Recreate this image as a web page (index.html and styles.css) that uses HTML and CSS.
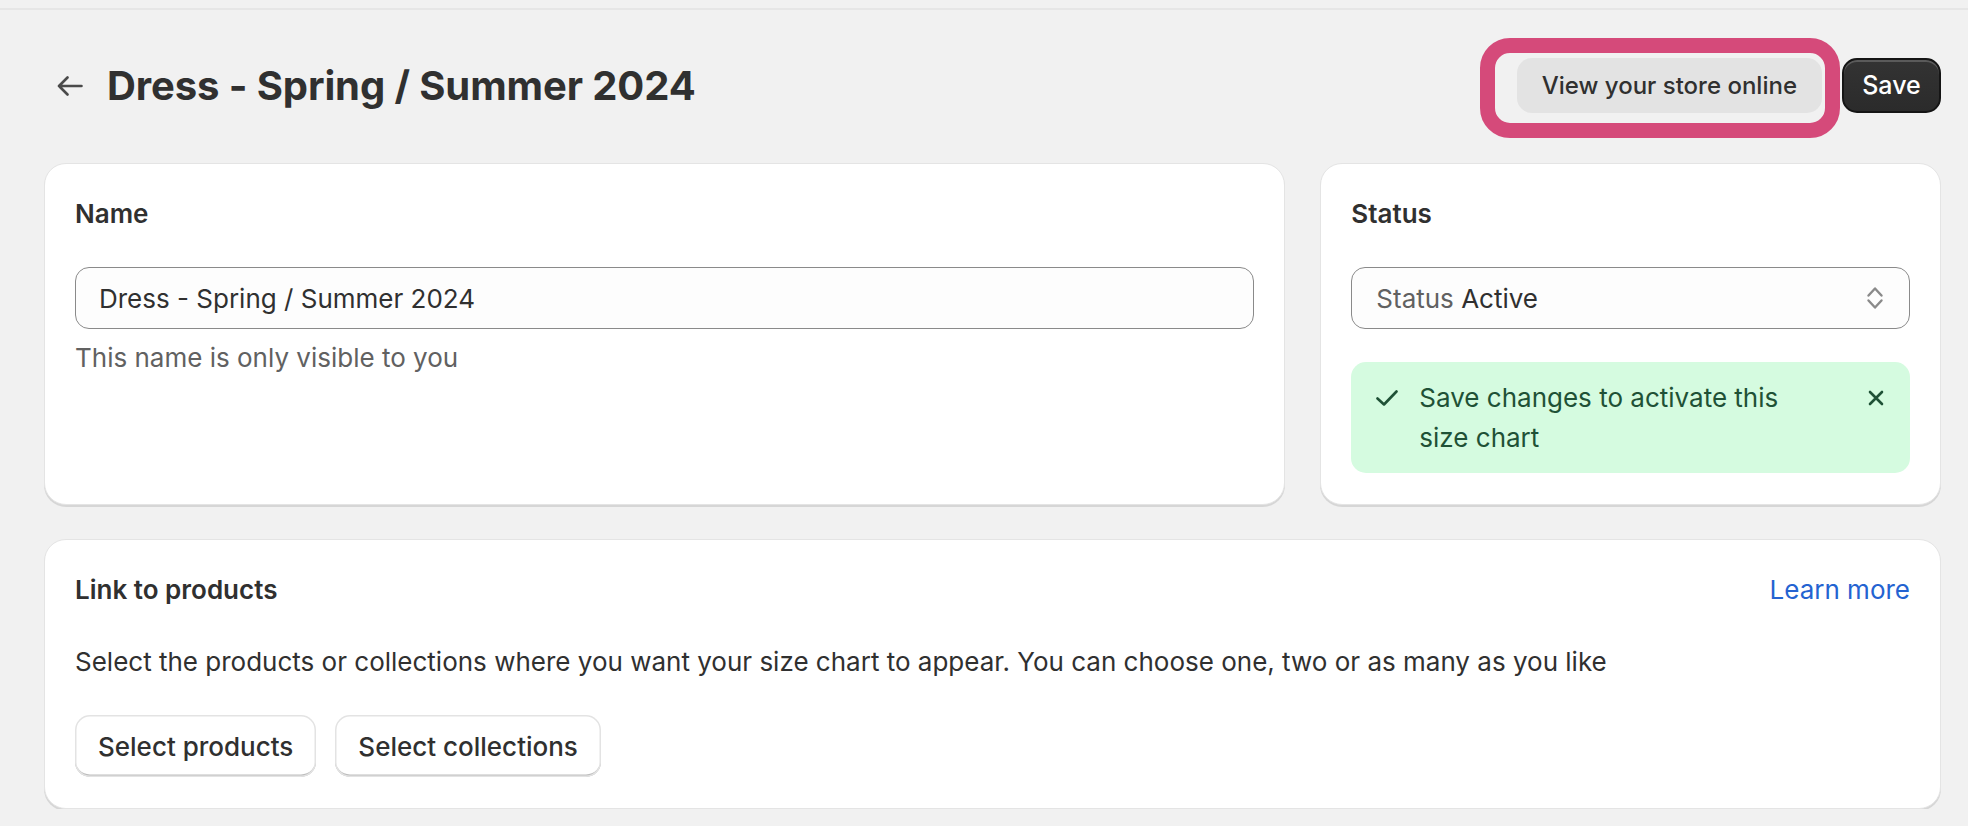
FILE: index.html
```html
<!DOCTYPE html>
<html lang="en">
<head>
<meta charset="utf-8">
<title>Dress - Spring / Summer 2024</title>
<link rel="stylesheet" href="styles.css">
</head>
<body>
<div class="topline"></div>
<main class="page">
  <header class="header">
    <div class="title-wrap">
      <button class="back" aria-label="Back">
        <svg width="26" height="20" viewBox="0 0 26 20" fill="none" stroke="#4a4a4a" stroke-width="2.6" stroke-linecap="round" stroke-linejoin="round"><path d="M24.5 10H2M10.5 1.5L2 10l8.5 8.5"/></svg>
      </button>
      <h1 class="title">Dress - Spring / Summer 2024</h1>
    </div>
    <div class="actions">
      <div class="highlight-wrap">
        <button class="btn btn-tertiary">View your store online</button>
        <span class="highlight"></span>
      </div>
      <button class="btn btn-primary">Save</button>
    </div>
  </header>

  <section class="grid">
    <div class="card">
      <h2 class="card-title">Name</h2>
      <div class="field">Dress - Spring / Summer 2024</div>
      <p class="help">This name is only visible to you</p>
    </div>
    <div class="card">
      <h2 class="card-title">Status</h2>
      <div class="field select">
        <span><span class="muted">Status</span> Active</span>
        <svg class="chev" width="18" height="26" viewBox="0 0 18 26" fill="none" stroke="#8a8a8a" stroke-width="2.4" stroke-linecap="round" stroke-linejoin="round"><path d="M2.5 10.5L9 3.5l6.5 7M2.5 15.5L9 22.5l6.5-7"/></svg>
      </div>
      <div class="banner">
        <svg class="check" width="22" height="16" viewBox="0 0 22 16" fill="none" stroke="#1f5136" stroke-width="2.6" stroke-linecap="round" stroke-linejoin="round"><path d="M1.5 8.5l6.5 6L20.5 1.5"/></svg>
        <p class="banner-text">Save changes to activate this size chart</p>
        <svg class="close" width="16" height="16" viewBox="0 0 16 16" fill="none" stroke="#1f5136" stroke-width="2.6" stroke-linecap="round"><path d="M2 2l12 12M14 2L2 14"/></svg>
      </div>
    </div>
    <div class="card wide">
      <div class="row-between">
        <h2 class="card-title">Link to products</h2>
        <a class="link" href="#">Learn more</a>
      </div>
      <p class="desc">Select the products or collections where you want your size chart to appear. You can choose one, two or as many as you like</p>
      <div class="btn-row">
        <button class="btn btn-secondary">Select products</button>
        <button class="btn btn-secondary">Select collections</button>
      </div>
    </div>
  </section>
</main>
</body>
</html>
```
FILE: styles.css
```css
* { box-sizing: border-box; }
body {
  margin: 0;
  background: #f1f1f1;
  font-family: Inter, "Noto Sans", "Liberation Sans", sans-serif;
  color: #303030;
  font-size: 26px;
  line-height: 39px;
}
.topline {
  height: 10px;
  border-bottom: 2px solid #e6e6e6;
}
.page {
  padding: 0 27px 0 44px;
}
.header {
  display: flex;
  align-items: center;
  justify-content: space-between;
  margin-top: 48px;
  height: 55px;
}
.title-wrap {
  display: flex;
  align-items: center;
  gap: 11px;
}
.back {
  width: 52px;
  height: 52px;
  border: 0;
  background: transparent;
  display: flex;
  align-items: center;
  justify-content: center;
  padding: 0;
}
.title {
  margin: 0;
  font-size: 40px;
  font-weight: 700;
  line-height: 52px;
  letter-spacing: -0.1px;
}
.actions {
  display: flex;
  align-items: center;
  gap: 20px;
}
.highlight-wrap {
  position: relative;
}
.highlight {
  position: absolute;
  left: -37px;
  top: -20px;
  right: -18px;
  bottom: -25px;
  border: 15px solid #d54a7a;
  border-radius: 30px;
  pointer-events: none;
}
.btn {
  font-family: inherit;
  font-size: 26px;
  font-weight: 550;
  line-height: 39px;
  border: 0;
  border-radius: 15px;
  display: flex;
  align-items: center;
  justify-content: center;
  color: #303030;
}
.btn-tertiary {
  height: 55px;
  padding: 0 25px;
  font-size: 24px;
  background: #e3e3e3;
}
.btn-primary {
  height: 55px;
  width: 99px;
  font-size: 25px;
  background: linear-gradient(#333 0%, #2b2b2b 100%);
  color: #fff;
  border: 2px solid #151515;
  box-shadow: inset 0 2px 0 #5a5a5a;
}
.btn-secondary {
  height: 62px;
  padding: 0 23px;
  background: #fff;
  box-shadow: inset 0 0 0 1.5px #e3e3e3, inset 0 -2.5px 0 #bdbdbd;
}
.grid {
  display: grid;
  grid-template-columns: 2fr 1fr;
  column-gap: 35px;
  row-gap: 34px;
  margin-top: 50px;
}
.card {
  background: #fff;
  border-radius: 22px;
  padding: 30px 30px 31px;
  border: 1.5px solid #e4e4e4;
  box-shadow: 0 2px 0 #d6d6d6;
}
.card.wide {
  grid-column: 1 / -1;
}
.card-title {
  margin: 0;
  font-size: 26px;
  font-weight: 600;
  line-height: 39px;
}
.field {
  margin-top: 34px;
  height: 62px;
  border: 1.5px solid #8a8a8a;
  border-radius: 14px;
  background: #fdfdfd;
  display: flex;
  align-items: center;
  padding: 0 25px 0 23px;
}
.select {
  justify-content: space-between;
  padding-left: 24px;
}
.muted { color: #616161; }
.help {
  margin: 9px 0 0;
  color: #616161;
}
.banner {
  margin-top: 33px;
  background: #d5fbe0;
  border-radius: 15px;
  padding: 16px 26px 15px 25px;
  display: flex;
  align-items: flex-start;
  color: #1f5136;
  line-height: 40px;
}
.check {
  margin-top: 12px;
  flex: none;
}
.banner-text {
  margin: 0 56px 0 21px;
  flex: 1;
}
.close {
  margin-top: 12px;
  flex: none;
}
.row-between {
  display: flex;
  justify-content: space-between;
  align-items: center;
}
.link {
  color: #2463d1;
  text-decoration: none;
}
.desc {
  margin: 33px 0 0;
}
.btn-row {
  margin-top: 34px;
  display: flex;
  gap: 19px;
}
```
